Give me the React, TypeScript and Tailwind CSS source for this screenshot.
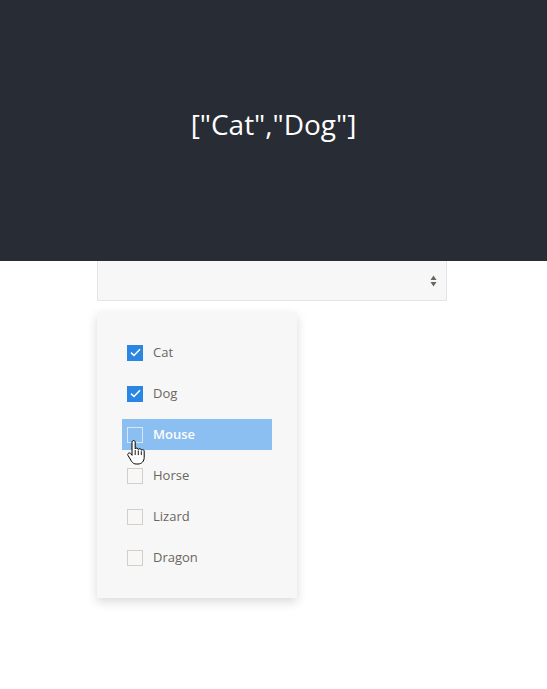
import { useState } from "react";

const ANIMALS = ["Cat", "Dog", "Mouse", "Horse", "Lizard", "Dragon"];

function HandCursor() {
  return (
    <svg
      className="pointer-events-none absolute left-[5px] top-[21px]"
      width="18"
      height="26"
      viewBox="0 0 18 26"
    >
      <path
        d="M5 2.2c0-1 .7-1.7 1.6-1.7s1.6.7 1.6 1.7V9c.3-.6.9-.9 1.5-.9.9 0 1.5.6 1.6 1.4.3-.5.8-.8 1.4-.8.9 0 1.5.6 1.6 1.5.3-.4.8-.6 1.3-.6.9 0 1.6.7 1.6 1.6v6.2c0 3.8-2.5 6.6-6.2 6.6H9.2c-2 0-3.4-.9-4.6-2.6L1.1 15.6c-.6-.9-.4-1.900.4-2.4.8-.5 1.7-.3 2.3.5L5 15.3z"
        fill="#fff"
        stroke="#000"
        strokeWidth="1"
        strokeLinejoin="round"
      />
      <path d="M8.2 10v5M11.3 10.5v4.6M14.3 11.3v3.8" stroke="#000" strokeWidth="0.9" />
    </svg>
  );
}

export default function App() {
  const [selected] = useState<string[]>(["Cat", "Dog"]);

  return (
    <div className="min-h-[689px] bg-white font-['Open_Sans','Noto_Sans',sans-serif]">
      <div className="flex h-[261px] items-center justify-center bg-[#282c34] pb-[14px]">
        <p className="text-[28px] text-white">{JSON.stringify(selected)}</p>
      </div>

      <div className="ml-[97px] w-[350px]">
        {/* select box */}
        <div className="flex h-[40px] items-center justify-end border border-t-0 border-[#e4e4e4] bg-[#f7f7f7] pr-[9px]">
          <svg width="7" height="12" viewBox="0 0 7 12">
            <path d="M3.5 0.5L6.5 5H0.5z" fill="#6b6560" />
            <path d="M0.5 7H6.5L3.5 11.5z" fill="#6b6560" />
          </svg>
        </div>

        {/* dropdown */}
        <div className="mt-[11px] flex w-[200px] flex-col gap-[10px] bg-[#f7f7f7] p-[25px] shadow-[0_4px_10px_rgba(0,0,0,0.15)]">
          {ANIMALS.map((a) => {
            const checked = selected.includes(a);
            const hover = a === "Mouse";
            return (
              <div
                key={a}
                className={
                  "relative flex h-[31px] items-center gap-[10px] pl-[5px] text-[13px] " +
                  (hover ? "bg-[#8bbef1] text-white" : "text-[#6b6560]")
                }
              >
                {checked ? (
                  <span className="flex h-[16px] w-[16px] items-center justify-center bg-[#2a86e2]">
                    <svg width="11" height="9" viewBox="0 0 11 9">
                      <path d="M1 4.6L4 7.5L10 1.2" fill="none" stroke="#fff" strokeWidth="1.5" />
                    </svg>
                  </span>
                ) : (
                  <span
                    className={
                      "h-[16px] w-[16px] border " +
                      (hover ? "border-[#d9e7f5]" : "border-[#d5cec7]")
                    }
                  />
                )}
                <span className={hover ? "font-semibold" : ""}>{a}</span>
                {hover && <HandCursor />}
              </div>
            );
          })}
        </div>
      </div>
    </div>
  );
}
